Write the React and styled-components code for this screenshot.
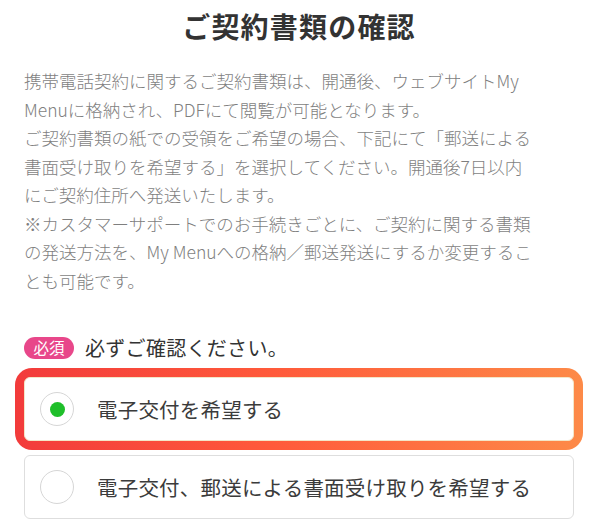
import React from "react";
import styled, { createGlobalStyle } from "styled-components";

const GlobalStyle = createGlobalStyle`
    html,body{margin:0;padding:0;background:#fff;}
    body{font-family:"Noto Sans CJK JP","Noto Sans",sans-serif;}
`;

const Page = styled.div`
    width:598px;height:529px;box-sizing:border-box;padding:6px 24px 0;overflow:hidden;background:#fff;
    display:flex;flex-direction:column;
`;
const Title = styled.h1`
    margin:0;text-align:center;font-size:28px;line-height:40px;font-weight:700;color:#333;letter-spacing:1.2px;
`;
const Lead = styled.p`
    margin:21px 0 0;font-size:17.5px;line-height:28.5px;font-weight:300;color:#7f7f7f;white-space:nowrap;
`;
const RequiredRow = styled.div`
    margin-top:42px;display:flex;align-items:center;column-gap:11px;height:22px;
`;
const Badge = styled.span`
    display:inline-flex;align-items:center;justify-content:center;width:50px;height:22px;border-radius:11px;
    background:#e8478a;color:#fff;font-size:15.5px;line-height:1;
`;
const RequiredText = styled.span`
    font-size:20px;color:#333;line-height:1;letter-spacing:0.3px;
`;
const Options = styled.div`
    margin-top:9px;display:flex;flex-direction:column;row-gap:5px;
`;
const Highlight = styled.div`
    margin:0 -9px;padding:9px;border-radius:17px;
    background:linear-gradient(90deg,#f23b3b 0%,#ff5a3a 45%,#fd8a48 100%);
`;
const Option = styled.label`
    display:flex;align-items:center;column-gap:23px;height:64px;box-sizing:border-box;padding:0 15px;
    background:#fff;border:1px solid ${p => p.$active ? "#f3e6c8" : "#dedede"};border-radius:6px;cursor:pointer;
`;
const Radio = styled.span`
    flex:none;width:34px;height:34px;box-sizing:border-box;border-radius:50%;border:1.5px solid #d6d6d6;
    display:flex;align-items:center;justify-content:center;
    &::after{content:"";width:15px;height:15px;border-radius:50%;background:${p => p.$checked ? "#1fbf2a" : "transparent"};}
`;
const OptionText = styled.span`
    font-size:20.5px;color:#3b3b3b;line-height:1;letter-spacing:0.2px;
`;

const lines = [
    "携帯電話契約に関するご契約書類は、開通後、ウェブサイトMy",
    "Menuに格納され、PDFにて閲覧が可能となります。",
    "ご契約書類の紙での受領をご希望の場合、下記にて「郵送による",
    "書面受け取りを希望する」を選択してください。開通後7日以内",
    "にご契約住所へ発送いたします。",
    "※カスタマーサポートでのお手続きごとに、ご契約に関する書類",
    "の発送方法を、My Menuへの格納／郵送発送にするか変更するこ",
    "とも可能です。",
];

const App = () => {
    return (
        <>
            <GlobalStyle />
            <Page>
                <Title>ご契約書類の確認</Title>
                <Lead>
                    {lines.map((l, i) => (
                        <React.Fragment key={i}>{l}{i < lines.length - 1 && <br />}</React.Fragment>
                    ))}
                </Lead>
                <RequiredRow>
                    <Badge>必須</Badge>
                    <RequiredText>必ずご確認ください。</RequiredText>
                </RequiredRow>
                <Options>
                    <Highlight>
                        <Option $active>
                            <Radio $checked />
                            <OptionText>電子交付を希望する</OptionText>
                        </Option>
                    </Highlight>
                    <Option>
                        <Radio />
                        <OptionText>電子交付、郵送による書面受け取りを希望する</OptionText>
                    </Option>
                </Options>
            </Page>
        </>
    );
}
export default App;
